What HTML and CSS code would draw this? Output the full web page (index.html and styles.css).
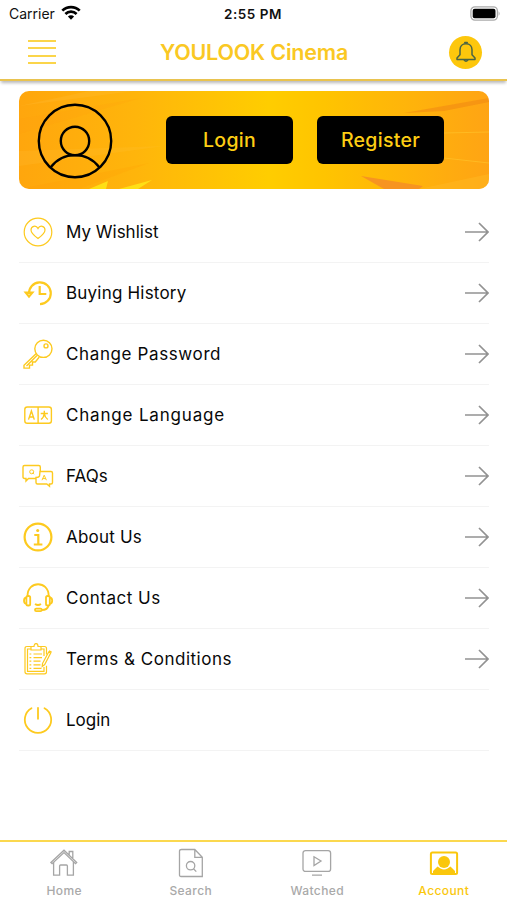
FILE: index.html
```html
<!DOCTYPE html>
<html lang="en">
<head>
    <meta charset="UTF-8">
    <meta name="viewport" content="width=device-width, initial-scale=1.0">
    <title>YOULOOK Cinema</title>
    <link rel="stylesheet" href="styles.css">
</head>
<body>
    <div class="status-bar">
        <div class="carrier">
            <span>Carrier</span>
            <svg width="20" height="15" viewBox="0 0 20 15" fill="none" stroke="#000" stroke-width="2.7">
                <path d="M1.3 5.6a12.4 12.4 0 0 1 17.4 0M4.4 9a8 8 0 0 1 11.2 0"/>
                <path d="M10 14.8l-3.1-3.3a4.4 4.4 0 0 1 6.2 0z" fill="#000" stroke="none"/>
            </svg>
        </div>
        <span class="time">2:55 PM</span>
        <svg class="battery" width="31" height="15" viewBox="0 0 31 15">
            <rect x=".9" y=".9" width="26.5" height="13.2" rx="4" fill="#fff" stroke="#aaa" stroke-width="1.3"/>
            <rect x="2.7" y="2.7" width="22.8" height="9.6" rx="2" fill="#000"/>
            <path d="M28.6 5.2q2 2.3 0 4.6z" fill="#aaa"/>
        </svg>
    </div>
    <header>
        <button class="menu" aria-label="Menu"><i></i><i></i><i></i><i></i></button>
        <h1>YOULOOK Cinema</h1>
        <button class="bell" aria-label="Notifications">
            <svg width="22" height="22" viewBox="0 0 22 22" fill="none" stroke="#4a6444" stroke-width="1.5" stroke-linejoin="round">
                <path d="M11 2.8c-3.800 0-6 2.700-6 6v5L2 17v1.600h18V17l-3-3.200v-5c0-3.300-2.200-6-6-6z"/>
                <path d="M9.800 2.600V1.400h2.400v1.200M9 18.800q2 2.800 4 0"/>
            </svg>
        </button>
    </header>
    <main>
        <section class="banner">
            <svg class="rays" viewBox="0 0 470 98" preserveAspectRatio="none">
                <path d="M0 28L122 7 0 43z" fill="#ff9a10" opacity=".15"/>
                <path d="M0 15L115 0H70z" fill="#ffc13a" opacity=".25"/>
                <path d="M0 60L145 55 0 75z" fill="#ffc13a" opacity=".2"/>
                <path d="M0 98L130 72 60 98z" fill="#ff9200" opacity=".15"/>
                <path d="M70 98l19-8-2 8zM100 98l33-9-14 9z" fill="#ffdf16"/>
                <path d="M385 22l85-15v4l-45 9z" fill="#f28a13" opacity=".6"/>
                <path d="M342 85l62 10-4 3h-35z" fill="#f79420"/>
                <path d="M425 42l45-1M425 67l45 5" stroke="#ffc229" fill="none" opacity=".7"/>
                <path d="M400 98l70-15v15z" fill="#ffb51f" opacity=".6"/>
            </svg>
            <svg class="avatar" width="76" height="76" viewBox="0 0 76 76" fill="none" stroke="#000" stroke-width="2.4">
                <circle cx="38" cy="38" r="36.2"/>
                <circle cx="38" cy="38" r="14.2"/>
                <path d="M13.5 64.5C26 48 50 48 62.5 64.5"/>
            </svg>
            <button class="btn">Login</button>
            <button class="btn register">Register</button>
        </section>
        <ul class="list">
            <li>
                <svg class="icon thin" viewBox="0 0 32 32">
                    <circle cx="16" cy="16" r="13.800"/>
                    <path d="M16 22.600c-4-3-7-5.300-7-8.600 0-4 5-5.300 7-1.600 2-3.700 7-2.400 7 1.600 0 3.300-3 5.600-7 8.600z"/>
                </svg>
                <span>My Wishlist</span>
                <svg class="arrow" viewBox="0 0 24 20"><path d="M0 10h23M14 1l9 9-9 9"/></svg>
            </li>
            <li>
                <svg class="icon bold" viewBox="0 0 32 32">
                    <path d="M7 17a10.900 10.900 0 1 1 11 10.200M17.700 9v8h6.600"/>
                    <path d="M3.800 15.700h6.500L7 19.600z"/>
                </svg>
                <span class="history">Buying History</span>
                <svg class="arrow" viewBox="0 0 24 20"><path d="M0 10h23M14 1l9 9-9 9"/></svg>
            </li>
            <li>
                <svg class="icon" viewBox="0 0 32 32">
                    <circle cx="21.400" cy="10.800" r="8.600"/>
                    <circle cx="24" cy="7.900" r="2"/>
                    <path d="M14.300 15.500L2 27.200v2.900h5.500v-3h3V24h2.800l4-5M4.500 28l10.500-10.500"/>
                </svg>
                <span class="password">Change Password</span>
                <svg class="arrow" viewBox="0 0 24 20"><path d="M0 10h23M14 1l9 9-9 9"/></svg>
            </li>
            <li>
                <svg class="icon" viewBox="0 0 32 32">
                    <rect x="2.800" y="8" width="26.600" height="16.200" rx="2.500"/>
                    <path d="M16.100 8v16M6.500 20.600l2.900-8.600 2.900 8.600M7.500 18h3.800M18.700 14.500h7.200M22.300 11.800v2.700M22.300 14.500q-.4 4-3.300 6M22.300 14.500q.6 4 3.500 6"/>
                </svg>
                <span class="language">Change Language</span>
                <svg class="arrow" viewBox="0 0 24 20"><path d="M0 10h23M14 1l9 9-9 9"/></svg>
            </li>
            <li>
                <svg class="icon" viewBox="0 0 32 32">
                    <path d="M14 18.500H6.500L4 21v-2.500H2.500q-1.500 0-1.500-1.500V7q0-1.500 1.500-1.500h14.300q1.500 0 1.500 1.500v4.500"/>
                    <path d="M18 11.500h11q1.500 0 1.500 1.500v9.500q0 1.500-1.500 1.500h-1.500v2.200L24.800 24h-9.300q-1.500 0-1.500-1.500v-5q3 0 3.500-1.500z"/>
                    <g stroke-width="1">
                        <circle cx="9.700" cy="11.800" r="2"/>
                        <path d="M10.500 12.700l1.500 1.500M20 20.200l2.200-5 2.200 5M20.700 18.600h3"/>
                    </g>
                </svg>
                <span>FAQs</span>
                <svg class="arrow" viewBox="0 0 24 20"><path d="M0 10h23M14 1l9 9-9 9"/></svg>
            </li>
            <li>
                <svg class="icon bold" viewBox="0 0 32 32">
                    <circle cx="16" cy="16" r="13.400"/>
                    <circle cx="15.700" cy="9.500" r="1.500" fill="#fdca1f" stroke="none"/>
                    <path d="M12.300 14h4v9.300M11.800 23.500h8.600"/>
                </svg>
                <span class="about">About Us</span>
                <svg class="arrow" viewBox="0 0 24 20"><path d="M0 10h23M14 1l9 9-9 9"/></svg>
            </li>
            <li>
                <svg class="icon mid" viewBox="0 0 32 32">
                    <path d="M5.500 14C5.500-1.700 26.700-1.700 26.700 14"/>
                    <rect x="4.400" y="14" width="3.800" height="9.500" rx="1.600"/>
                    <rect x="24" y="14" width="3.800" height="9.500" rx="1.600"/>
                    <path d="M4.400 15.500q-2.400.5-2.400 3.200t2.400 3.300M27.800 15.500q2.400.5 2.400 3.200t-2.400 3.300M26.500 23.500q-.8 4.500-6.800 4.500M13 22q3 2 6 0"/>
                    <rect x="13" y="26.600" width="6.700" height="2.500" rx="1.200"/>
                </svg>
                <span class="contact">Contact Us</span>
                <svg class="arrow" viewBox="0 0 24 20"><path d="M0 10h23M14 1l9 9-9 9"/></svg>
            </li>
            <li>
                <svg class="icon thin" viewBox="0 0 32 32">
                    <path d="M9 3.500H5q-2 0-2 2v23.300q0 2 2 2h17.500q2 0 2-2v-6M19 3.500h3.500q2 0 2 2v6"/>
                    <path d="M9 6H5.500v22.300H22V24M19 6h3v7M9 7V3.500h3C12-.4 16-.4 16 3.500h3V7z"/>
                    <path d="M7.500 11h1.800M11.500 11h8.500M7.500 14.600h1.800M11.500 14.600h8.500M7.500 18.200h1.800M11.500 18.200h7M7.500 21.800h1.800M11.500 21.800h7M7.500 25.400h1.800M11.500 25.400h8"/>
                    <path d="M20.500 20.500L26.700 9l2 1-6 11.500-2.500 2zM27 9l.5-1 1.600.8-.4 1.200"/>
                </svg>
                <span class="terms">Terms &amp; Conditions</span>
                <svg class="arrow" viewBox="0 0 24 20"><path d="M0 10h23M14 1l9 9-9 9"/></svg>
            </li>
            <li>
                <svg class="icon mid" viewBox="0 0 32 32" stroke-linecap="round">
                    <path d="M9.500 4.200a13.200 13.200 0 1 0 13 0M16 3.800v11"/>
                </svg>
                <span>Login</span>
            </li>
        </ul>
    </main>
    <nav>
        <a>
            <svg width="30" height="30" viewBox="0 0 30 30">
                <path d="M4.600 14v13.200h6V18q0-1 1-1h5.800q1 0 1 1v9.200h6V14"/>
                <path d="M1.900 14.500L15 2.200l12.700 12.300-1.200 1.200L15 4.600 3.100 15.700zM20.200 6.800V3.500h3.600v6.600"/>
            </svg>
            <span>Home</span>
        </a>
        <a>
            <svg width="30" height="30" viewBox="0 0 30 30">
                <path d="M5.500 1.500h13.300l7.500 7.800V28.500H5q-1.500 0-1.500-1.500V3q0-1.500 2-1.500zM18.800 1.500v7.800h7.500"/>
                <circle cx="14.600" cy="17.700" r="4.200"/>
                <path d="M17.500 20.800l2.800 2.800"/>
            </svg>
            <span>Search</span>
        </a>
        <a>
            <svg width="30" height="30" viewBox="0 0 30 30">
                <rect x="1" y="2.600" width="27.600" height="20.800" rx="2.500"/>
                <path d="M12 8.800l7 4.200-7 4.500zM10 27.200h10"/>
            </svg>
            <span>Watched</span>
        </a>
        <a class="active">
            <svg width="30" height="30" viewBox="0 0 30 30">
                <rect x="1.900" y="4.400" width="26.200" height="21.700" rx="1.500" stroke-width="2"/>
                <circle cx="15" cy="14" r="6" fill="#fac70c" stroke="none"/>
                <path d="M4 26v-3l4.500-4.500 3 2q3.500 2 7 0l3-2L26 23v3z" fill="#fac70c" stroke="none"/>
            </svg>
            <span>Account</span>
        </a>
    </nav>
</body>
</html>
```
FILE: styles.css
```css
*{
    margin: 0;
    padding: 0;
    box-sizing: border-box;
}
body{
    height: 900px;
    display: flex;
    flex-direction: column;
    background-color: #fff;
    font-family: Inter, "Liberation Sans", sans-serif;
    overflow: hidden;
}
button{
    border: none;
    background: none;
}
.status-bar{
    height: 27px;
    display: grid;
    grid-template-columns: 1fr auto 1fr;
    align-items: center;
    padding: 0 6px 0 9px;
    font-size: 14px;
    color: #111;
}
.carrier{
    display: flex;
    align-items: center;
    gap: 6px;
}
.carrier svg{
    margin-top: -3px;
}
.time{
    font-size: 13.5px;
    font-weight: 600;
    margin-right: 4px;
    letter-spacing: 0.5px;
}
.battery{
    justify-self: end;
}
header{
    height: 54px;
    display: grid;
    grid-template-columns: 60px 1fr 60px;
    align-items: center;
    padding: 0 25px 2px 28px;
    border-bottom: 2px solid #e9c34f;
    box-shadow: 0 3px 3px -1px rgba(0, 0, 0, 0.28);
}
.menu{
    width: 28px;
    height: 24px;
    display: flex;
    flex-direction: column;
    justify-content: space-between;
}
.menu i{
    height: 2px;
    background-color: #fbd54a;
}
h1{
    font-size: 21.5px;
    font-weight: 600;
    letter-spacing: -0.2px;
    color: #fac823;
    text-align: center;
    white-space: nowrap;
    margin-right: 2px;
}
.bell{
    width: 33px;
    height: 33px;
    justify-self: end;
    display: flex;
    align-items: center;
    justify-content: center;
    border-radius: 50%;
    background-color: #fdc70c;
}
main{
    flex: 1;
    padding: 10px 18px 0 19px;
}
.banner{
    height: 98px;
    display: grid;
    grid-template-columns: 147px 127px 151px;
    align-items: center;
    border-radius: 10px;
    overflow: hidden;
    background: linear-gradient(90deg, #ffa60d 0%, #ffb50b 25%, #ffcd00 53%, #ffc400 65%, #ffa414 100%);
}
.banner > *{
    grid-row: 1;
}
.rays{
    grid-column: 1 / -1;
    width: 470px;
    height: 98px;
}
.avatar{
    grid-column: 1;
    margin: 2px 0 0 18px;
}
.btn{
    grid-column: 2;
    height: 48px;
    border-radius: 6px;
    background-color: #000;
    color: #fdce14;
    font-family: Inter, "Liberation Sans", sans-serif;
    font-size: 19.5px;
    font-weight: 500;
    letter-spacing: 0.3px;
}
.register{
    grid-column: 3;
    margin-left: 24px;
    width: 127px;
}
.list{
    list-style: none;
    margin-top: 13px;
}
.list li{
    height: 61px;
    display: flex;
    align-items: center;
    padding-left: 3px;
    border-bottom: 1px solid #f3f3f3;
}
.list span{
    flex: 1;
    margin-left: 12px;
    font-size: 17px;
    color: #080808;
    white-space: nowrap;
}
.list .history, .list .about{
    letter-spacing: 0.2px;
}
.list .password{
    letter-spacing: 0.62px;
}
.list .language{
    letter-spacing: 0.82px;
}
.list .contact, .list .terms{
    letter-spacing: 0.52px;
}
.icon{
    width: 32px;
    height: 32px;
    fill: none;
    stroke: #fdca1f;
    stroke-width: 1.4;
}
.icon.thin{
    stroke-width: 1.2;
}
.icon.mid{
    stroke-width: 1.8;
}
.icon.bold{
    stroke-width: 2.2;
}
.arrow{
    width: 24px;
    height: 20px;
    fill: none;
    stroke: #929292;
    stroke-width: 1.7;
}
nav{
    height: 60px;
    display: grid;
    grid-template-columns: repeat(4, 1fr);
    padding-left: 1px;
    border-top: 2px solid #fbd84f;
}
nav a{
    display: flex;
    flex-direction: column;
    align-items: center;
    padding-top: 6px;
    font-size: 12px;
    font-weight: 500;
    letter-spacing: 0.4px;
    color: #a9a9a9;
}
nav svg{
    fill: none;
    stroke: #a5a5a5;
    stroke-width: 1.3;
}
nav span{
    margin-top: 5px;
    line-height: 15px;
}
.active{
    color: #fac70c;
}
.active svg{
    stroke: #fac70c;
}
```
